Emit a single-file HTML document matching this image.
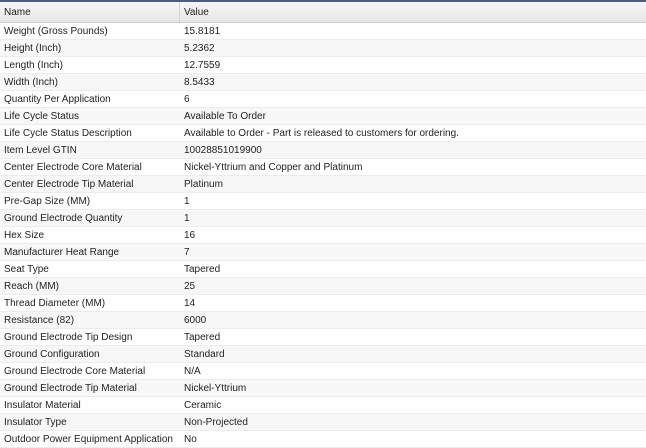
<!DOCTYPE html>
<html><head><style>
body{margin:0;width:646px;height:446px;overflow:hidden;background:#fff;font-family:"Liberation Sans",sans-serif;font-size:10px;color:#222}
.top{height:2px;background:#4a5a8c}
.hd{height:20px;background:linear-gradient(#f6f6f6,#e6e6e6);border-bottom:1px solid #cfcfcf;position:relative}
.hd span{position:absolute;top:5px}
.hd .d{position:absolute;left:179px;top:0;width:1px;height:20px;background:#d4d4d4}
.r{height:16px;border-bottom:1px solid #ececec;position:relative}
.r:nth-child(even){background:#f7f7f7}
.r span{position:absolute;top:3px;white-space:nowrap}
.a{left:4px}.b{left:184px}
</style></head><body>
<div class="top"></div>
<div class="hd"><span class="a">Name</span><div class="d"></div><span class="b">Value</span></div>
<div id="t">
<div class="r"><span class="a">Weight (Gross Pounds)</span><span class="b">15.8181</span></div>
<div class="r"><span class="a">Height (Inch)</span><span class="b">5.2362</span></div>
<div class="r"><span class="a">Length (Inch)</span><span class="b">12.7559</span></div>
<div class="r"><span class="a">Width (Inch)</span><span class="b">8.5433</span></div>
<div class="r"><span class="a">Quantity Per Application</span><span class="b">6</span></div>
<div class="r"><span class="a">Life Cycle Status</span><span class="b">Available To Order</span></div>
<div class="r"><span class="a">Life Cycle Status Description</span><span class="b">Available to Order - Part is released to customers for ordering.</span></div>
<div class="r"><span class="a">Item Level GTIN</span><span class="b">10028851019900</span></div>
<div class="r"><span class="a">Center Electrode Core Material</span><span class="b">Nickel-Yttrium and Copper and Platinum</span></div>
<div class="r"><span class="a">Center Electrode Tip Material</span><span class="b">Platinum</span></div>
<div class="r"><span class="a">Pre-Gap Size (MM)</span><span class="b">1</span></div>
<div class="r"><span class="a">Ground Electrode Quantity</span><span class="b">1</span></div>
<div class="r"><span class="a">Hex Size</span><span class="b">16</span></div>
<div class="r"><span class="a">Manufacturer Heat Range</span><span class="b">7</span></div>
<div class="r"><span class="a">Seat Type</span><span class="b">Tapered</span></div>
<div class="r"><span class="a">Reach (MM)</span><span class="b">25</span></div>
<div class="r"><span class="a">Thread Diameter (MM)</span><span class="b">14</span></div>
<div class="r"><span class="a">Resistance (82)</span><span class="b">6000</span></div>
<div class="r"><span class="a">Ground Electrode Tip Design</span><span class="b">Tapered</span></div>
<div class="r"><span class="a">Ground Configuration</span><span class="b">Standard</span></div>
<div class="r"><span class="a">Ground Electrode Core Material</span><span class="b">N/A</span></div>
<div class="r"><span class="a">Ground Electrode Tip Material</span><span class="b">Nickel-Yttrium</span></div>
<div class="r"><span class="a">Insulator Material</span><span class="b">Ceramic</span></div>
<div class="r"><span class="a">Insulator Type</span><span class="b">Non-Projected</span></div>
<div class="r"><span class="a">Outdoor Power Equipment Application</span><span class="b">No</span></div>
</div>
</body></html>
